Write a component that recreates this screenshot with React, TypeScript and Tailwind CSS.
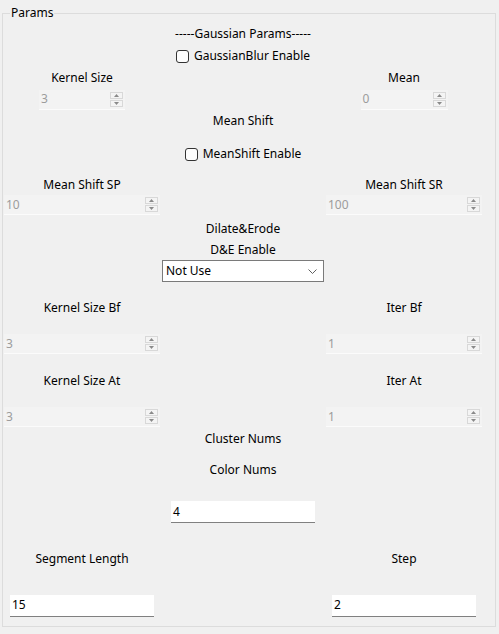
import React from "react";

const font = { fontFamily: '"Noto Sans", "Noto Sans CJK SC", sans-serif' };

function Label({ text, col }: { text: string; col: string }) {
  return <span className={`${col} justify-self-center whitespace-nowrap text-[12px] leading-[16px] text-black`}>{text}</span>;
}

function Arrow({ up }: { up: boolean }) {
  return (
    <div className="w-[13px] h-[7px] border border-[#d8d8d8] bg-[#f4f4f4] flex items-center justify-center">
      <svg width="5" height="3" viewBox="0 0 5 3">
        {up ? <path d="M0 3 L2.5 0 L5 3 Z" fill="#8a8a8a" /> : <path d="M0 0 L2.5 3 L5 0 Z" fill="#8a8a8a" />}
      </svg>
    </div>
  );
}

function SpinBox({ value, className }: { value: string; className: string }) {
  return (
    <div className={`${className} h-[20px] bg-[#f3f3f3] border-b border-[#fbfbfb] flex items-center justify-between pl-[2px] pr-[2px]`}>
      <span className="text-[12px] leading-[16px] text-[#9c9c9c]">{value}</span>
      <div className="flex flex-col gap-[1px]">
        <Arrow up />
        <Arrow up={false} />
      </div>
    </div>
  );
}

function LineEdit({ value, className }: { value: string; className: string }) {
  return (
    <div className={`${className} h-[22px] w-[144px] bg-white border-b border-[#808080] flex items-center pl-[2px]`}>
      <span className="text-[12px] leading-[16px] text-black">{value}</span>
    </div>
  );
}

function CheckBox({ text }: { text: string }) {
  return (
    <label className="col-start-2 justify-self-center flex items-center gap-[5px] whitespace-nowrap">
      <span className="w-[13px] h-[13px] rounded-[3px] border border-[#333333] bg-[#fdfdfd]" />
      <span className="text-[12px] leading-[16px] text-black">{text}</span>
    </label>
  );
}

const row = "grid grid-cols-[156px_166px_156px] items-center";

export default function App() {
  return (
    <div className="min-h-screen bg-[#f0f0f0] pt-[5px]" style={font}>
      <fieldset className="ml-[2px] mr-[3px] border border-[#dcdcdc] pl-[1px] pt-[2px] pb-[1px]">
        <legend className="ml-[6px] px-[1px] text-[12px] leading-[16px] text-black">Params</legend>

        <div className={`${row} h-[22px]`}>
          <Label col="col-start-2" text="-----Gaussian Params-----" />
        </div>
        <div className={`${row} h-[22px]`}>
          <CheckBox text="GaussianBlur Enable" />
        </div>
        <div className={`${row} h-[22px]`}>
          <Label col="col-start-1" text="Kernel Size" />
          <Label col="col-start-3" text="Mean" />
        </div>
        <div className={`${row} h-[21px]`}>
          <SpinBox className="col-start-1 justify-self-center w-[86px]" value="3" />
          <SpinBox className="col-start-3 justify-self-center w-[87px]" value="0" />
        </div>
        <div className={`${row} h-[22px]`}>
          <Label col="col-start-2" text="Mean Shift" />
        </div>
        <div className={`${row} h-[44px]`}>
          <CheckBox text="MeanShift Enable" />
        </div>
        <div className={`${row} h-[18px]`}>
          <Label col="col-start-1" text="Mean Shift SP" />
          <Label col="col-start-3" text="Mean Shift SR" />
        </div>
        <div className={`${row} h-[22px]`}>
          <SpinBox className="col-start-1 w-full" value="10" />
          <SpinBox className="col-start-3 w-full" value="100" />
        </div>
        <div className={`${row} h-[26px]`}>
          <Label col="col-start-2" text="Dilate&Erode" />
        </div>
        <div className={`${row} h-[14px]`}>
          <Label col="col-start-2" text="D&E Enable" />
        </div>
        <div className={`${row} h-[30px]`}>
          <div className="col-start-2 mx-[2px] h-[22px] bg-white border border-[#7a7a7a] flex items-center justify-between pl-[3px] pr-[6px]">
            <span className="text-[12px] leading-[16px] text-black">Not Use</span>
            <svg width="9" height="5" viewBox="0 0 9 5">
              <path d="M0.5 0.5 L4.5 4.5 L8.5 0.5" fill="none" stroke="#606060" strokeWidth="1" />
            </svg>
          </div>
        </div>
        <div className={`${row} h-[44px]`}>
          <Label col="col-start-1" text="Kernel Size Bf" />
          <Label col="col-start-3" text="Iter Bf" />
        </div>
        <div className={`${row} h-[28px]`}>
          <SpinBox className="col-start-1 w-full" value="3" />
          <SpinBox className="col-start-3 w-full" value="1" />
        </div>
        <div className={`${row} h-[46px]`}>
          <Label col="col-start-1" text="Kernel Size At" />
          <Label col="col-start-3" text="Iter At" />
        </div>
        <div className={`${row} h-[26px]`}>
          <SpinBox className="col-start-1 w-full" value="3" />
          <SpinBox className="col-start-3 w-full" value="1" />
        </div>
        <div className={`${row} h-[18px]`}>
          <Label col="col-start-2" text="Cluster Nums" />
        </div>
        <div className={`${row} h-[44px]`}>
          <Label col="col-start-2" text="Color Nums" />
        </div>
        <div className={`${row} h-[40px]`}>
          <LineEdit className="col-start-2 justify-self-center" value="4" />
        </div>
        <div className={`${row} h-[54px]`}>
          <Label col="col-start-1" text="Segment Length" />
          <Label col="col-start-3" text="Step" />
        </div>
        <div className={`${row} h-[39px]`}>
          <LineEdit className="col-start-1 justify-self-center" value="15" />
          <LineEdit className="col-start-3 justify-self-center" value="2" />
        </div>
      </fieldset>
    </div>
  );
}
